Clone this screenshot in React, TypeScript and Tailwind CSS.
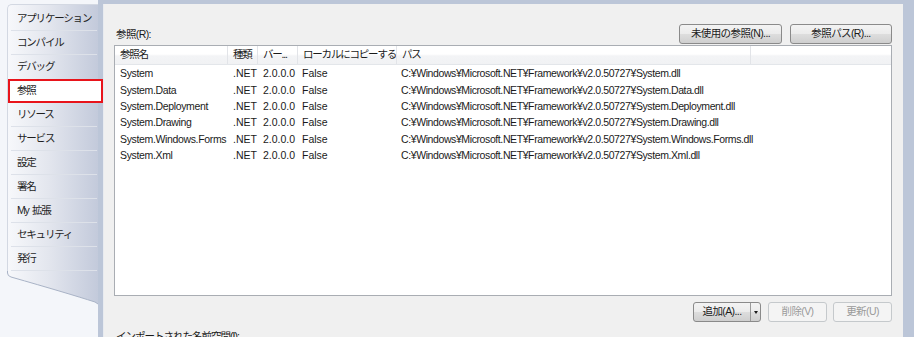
import React from 'react';

const font = { fontFamily: '"Liberation Sans", "Noto Sans CJK JP", sans-serif' };

const tabs = ['アプリケーション', 'コンパイル', 'デバッグ', '参照', 'リソース', 'サービス', '設定', '署名', 'My\u00a0\u00a0拡張', 'セキュリティ', '発行'];

const refs = [
  { name: 'System', file: 'System.dll' },
  { name: 'System.Data', file: 'System.Data.dll' },
  { name: 'System.Deployment', file: 'System.Deployment.dll' },
  { name: 'System.Drawing', file: 'System.Drawing.dll' },
  { name: 'System.Windows.Forms', file: 'System.Windows.Forms.dll' },
  { name: 'System.Xml', file: 'System.Xml.dll' },
];

const Button: React.FC<{ label: string; w: string; disabled?: boolean }> = ({ label, w, disabled }) => (
  <div
    className={`h-[20px] ${w} flex items-center justify-center rounded-[3px] border text-[10.5px] tracking-[-0.6px] ${
      disabled
        ? 'border-[#c5c9cc] bg-[#f4f4f4] text-[#9a9a9a]'
        : 'border-[#8a8a8a] bg-[linear-gradient(#f3f3f3_0%,#ebebeb_50%,#dddddd_51%,#cfcfcf_100%)] text-[#1a1a1a]'
    }`}
  >
    {label}
  </div>
);

const Sidebar: React.FC = () => (
  <div className="relative w-[103px] h-full shrink-0 bg-[#f4f6fa] flex flex-col pt-[4px]">
    <div className="ml-[7px] w-[91px] pt-[2px] rounded-tl-[5px] border-l border-t border-[#d3d8e2] bg-[linear-gradient(to_right,#f7f8fb,#e3e6ee_45%,#c3cadb)] flex flex-col">
      {tabs.map((t, i) => (
        <div key={t}>
          {t === '参照' ? (
            <div className="relative z-10 h-[24px] w-[95px] border-2 border-[#e8141b] bg-white flex items-center pl-[7px] text-[10.5px] tracking-[-1.2px] text-[#1a1a1a]">
              {t}
            </div>
          ) : (
            <div className="h-[23px] flex items-center pl-[9px] text-[10.5px] tracking-[-1.2px] text-[#1e1e1e] whitespace-nowrap">{t}</div>
          )}
          {i !== 2 && i !== 3 ? (
            <div className="ml-[3px] mr-[1px] h-[1px] bg-[#dde1e9]" />
          ) : i === 2 ? (
            <div className="h-[1px]" />
          ) : null}
        </div>
      ))}
    </div>
    <svg className="ml-[7px]" width="91" height="34" viewBox="0 0 91 34">
      <defs>
        <linearGradient id="tg" x1="0" x2="1" y1="0" y2="0">
          <stop offset="0" stopColor="#f7f8fb" />
          <stop offset="0.45" stopColor="#e3e6ee" />
          <stop offset="1" stopColor="#c3cadb" />
        </linearGradient>
      </defs>
      <path d="M0 0 L91 0 L91 33 L88 31 Q60 22 4 6 Q0 5 0 2 Z" fill="url(#tg)" />
      <path d="M0.5 0 L0.5 2 Q0.5 5 4 6 Q60 22 88 31 L91 33" fill="none" stroke="#a9b3c6" strokeWidth="1" />
    </svg>
    <div className="absolute right-0 top-0 bottom-0 w-[5px] bg-[#bcc6d8]" />
  </div>
);

export default function App() {
  return (
    <div className="w-[914px] h-[337px] overflow-hidden flex bg-[#bcc6d8]" style={font}>
      <Sidebar />
      <div className="mt-[4px] w-[800px] h-[333px] shrink-0 bg-[#f0f0f0] border-l border-[#e8ebf0] flex flex-col pl-[10px] pr-[10px] overflow-hidden">
        <div className="shrink-0 flex items-end justify-between pt-[18px] h-[41px]">
          <div className="text-[10.5px] tracking-[-0.6px] text-[#1a1a1a] pl-[2px] pb-[2px]">参照(R):</div>
          <div className="flex gap-[8px] pr-[1px] pb-[1px]">
            <Button label="未使用の参照(N)..." w="w-[103px]" />
            <Button label="参照パス(R)..." w="w-[102px]" />
          </div>
        </div>
        <div className="shrink-0 w-[778px] h-[251px] border border-[#a9adb3] bg-white text-[10.5px] text-[#1a1a1a]">
          <div className="flex h-[19px] bg-[linear-gradient(#ffffff_0%,#ffffff_45%,#f3f4f6_55%,#f1f2f4_100%)] border-b border-[#e3e6ea]">
            {[
              ['参照名', 'w-[113px]'],
              ['種類', 'w-[30px]'],
              ['バー...', 'w-[40px]'],
              ['ローカルにコピーする', 'w-[99px]'],
              ['パス', 'w-[354px]'],
              ['', 'flex-1'],
            ].map(([h, w], i) => (
              <div key={i} className={`${w} h-full flex items-center pl-[5px] border-r border-[#e2e4e8] last:border-r-0 whitespace-nowrap overflow-hidden tracking-[-1.2px]`}>
                {h}
              </div>
            ))}
          </div>
          <div className="mt-[1px]">
            {refs.map((r) => (
              <div key={r.name} className="flex h-[16.4px] items-center whitespace-nowrap">
                <div className="w-[113px] pl-[5px] overflow-hidden tracking-[-0.35px]">{r.name}</div>
                <div className="w-[30px] pl-[5px]">.NET</div>
                <div className="w-[40px] pl-[5px]">2.0.0.0</div>
                <div className="w-[99px] pl-[4px]">False</div>
                <div className="w-[354px] pl-[4px] tracking-[-0.4px]">C:¥Windows¥Microsoft.NET¥Framework¥v2.0.50727¥{r.file}</div>
              </div>
            ))}
          </div>
        </div>
        <div className="shrink-0 flex justify-end gap-[6px] pt-[6px] pr-[1px]">
          <div className="h-[20px] w-[68px] flex rounded-[3px] border border-[#8a8a8a] bg-[linear-gradient(#f3f3f3_0%,#ebebeb_50%,#dddddd_51%,#cfcfcf_100%)] text-[10.5px] tracking-[-0.6px] text-[#1a1a1a] mr-[1px]">
            <div className="flex-1 flex items-center justify-center border-r border-[#9a9a9a]">追加(A)...</div>
            <div className="w-[9px] flex items-center justify-center">
              <div className="w-0 h-0 border-l-[2.5px] border-r-[2.5px] border-t-[3px] border-l-transparent border-r-transparent border-t-[#1a1a1a]" />
            </div>
          </div>
          <Button label="削除(V)" w="w-[59px]" disabled />
          <Button label="更新(U)" w="w-[59px]" disabled />
        </div>
        <div className="shrink-0 pt-[7px] pl-[2px] text-[10.5px] tracking-[-1px] text-[#1a1a1a] leading-[14px]">インポートされた名前空間(I):</div>
      </div>
    </div>
  );
}
